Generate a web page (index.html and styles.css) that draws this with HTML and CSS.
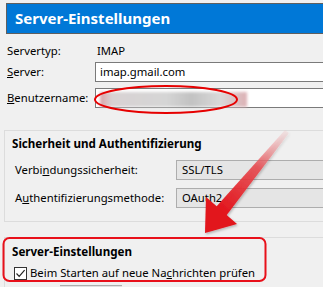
FILE: index.html
```html
<!DOCTYPE html>
<html lang="de">
<head>
  <meta charset="UTF-8">
  <title>Server-Einstellungen</title>
  <link rel="stylesheet" href="styles.css">
</head>
<body>
  <div class="page">
    <div class="header">Server-Einstellungen</div>

    <div class="form">
      <span class="label first">Servertyp:</span>
      <span class="value first">IMAP</span>
      <span class="label"><u>S</u>erver:</span>
      <div class="field">imap.gmail.com</div>
      <span class="label"><u>B</u>enutzername:</span>
      <div class="field user"><span class="blur"></span></div>
    </div>

    <div class="group security">
      <div class="group-title">Sicherheit und Authentifizierung</div>
      <div class="group-grid">
        <span class="label">Verbi<u>n</u>dungssicherheit:</span>
        <div class="select">SSL/TLS</div>
        <span class="label">A<u>u</u>thentifizierungsmethode:</span>
        <div class="select">OAuth2</div>
      </div>
    </div>

    <div class="group server">
      <div class="group-title">Server-Einstellungen</div>
      <label class="check">
        <span class="box">
          <svg width="11" height="11" viewBox="0 0 11 11"><path d="M1.5 5.5 L4.2 8.3 L9.6 2.2" fill="none" stroke="#222" stroke-width="1.2"/></svg>
        </span>
        <span>Beim Starten auf neue Na<u>c</u>hrichten prüfen</span>
      </label>
      <div class="button"></div>
    </div>

    <svg class="marks" width="323" height="287" viewBox="0 0 323 287">
      <defs>
        <linearGradient id="shaft" x1="287" y1="131" x2="221" y2="211" gradientUnits="userSpaceOnUse">
          <stop offset="0" stop-color="#f4b4b6" stop-opacity="0.2"/>
          <stop offset="0.45" stop-color="#e8444a" stop-opacity="0.85"/>
          <stop offset="1" stop-color="#e2141b"/>
        </linearGradient>
        <filter id="shadow" x="-20%" y="-20%" width="140%" height="140%">
          <feDropShadow dx="1" dy="1.5" stdDeviation="1.2" flood-color="#000" flood-opacity="0.25"/>
        </filter>
      </defs>
      <ellipse cx="166" cy="99.5" rx="71" ry="13.5" fill="none" stroke="#e60000" stroke-width="2"/>
      <g filter="url(#shadow)">
        <polygon points="285,130 289,133 226,216 216,207" fill="url(#shaft)"/>
        <polygon points="205,233 206,197 237,224" fill="#e2141b"/>
      </g>
      <rect x="3.5" y="238" width="262" height="43" rx="6" fill="none" stroke="#e8101a" stroke-width="2"/>
    </svg>
  </div>
</body>
</html>
```

FILE: styles.css
```css
body {
  margin: 0;
  background: #f0f0f0;
  font-family: "Noto Sans", sans-serif;
  font-size: 11.3px;
  color: #000;
}
.page {
  position: relative;
  width: 323px;
  height: 287px;
  overflow: hidden;
}
.header {
  margin: 3px 0 0 6px;
  height: 29px;
  border: 1px solid #5f5f5f;
  border-right: none;
  background: #0078d7;
  color: #fff;
  font-weight: bold;
  font-size: 15px;
  line-height: 29px;
  padding-left: 8px;
}
.form {
  display: grid;
  grid-template-columns: 88px 1fr;
  grid-template-rows: 18px 22px 26px;
  align-items: end;
  padding: 8px 0 0 7px;
}
.label, .value {
  line-height: 20px;
  white-space: nowrap;
}
.first {
  line-height: 18px;
}
.value {
  padding-left: 2px;
}
.field {
  position: relative;
  height: 20px;
  box-sizing: border-box;
  border: 1px solid #7a7a7a;
  border-right: none;
  background: #fff;
  padding-left: 4px;
  line-height: 18px;
}
.blur {
  position: absolute;
  left: 4px;
  top: 3px;
  width: 147px;
  height: 15px;
  background: linear-gradient(90deg, #d9a4a9 0%, #d8d2d3 8%, #d5d5d5 45%, #c2c2c2 62%, #d9d9d9 82%, #ddb0b4 100%);
  filter: blur(1.5px);
}
.group {
  margin: 22px 0 0 4px;
  border: 1px solid #dcdcdc;
  border-right: none;
  padding: 5px 0 13px 7px;
}
.group-title {
  font-weight: bold;
  font-size: 11.6px;
  line-height: 16px;
}
.group-grid {
  display: grid;
  grid-template-columns: 161px 1fr;
  grid-auto-rows: 20px;
  row-gap: 8px;
  align-items: center;
  margin-top: 8px;
  padding-left: 3px;
}
.select {
  height: 20px;
  box-sizing: border-box;
  border: 1px solid #adadad;
  border-right: none;
  background: #e5e5e5;
  padding-left: 5px;
  line-height: 18px;
}
.server {
  margin-top: 15px;
  padding-top: 6px;
  padding-bottom: 0;
  border-bottom: none;
}
.check {
  display: flex;
  align-items: center;
  gap: 3px;
  margin: 5px 0 0 2px;
  line-height: 16px;
  white-space: nowrap;
}
.box {
  display: flex;
  align-items: center;
  justify-content: center;
  width: 13px;
  height: 13px;
  box-sizing: border-box;
  border: 1px solid #333;
  background: #fff;
}
.button {
  margin: 4px 0 0 48px;
  width: 62px;
  height: 1px;
  border-top: 1px solid #adadad;
  background: #e1e1e1;
}
.marks {
  position: absolute;
  left: 0;
  top: 0;
  pointer-events: none;
}
```
